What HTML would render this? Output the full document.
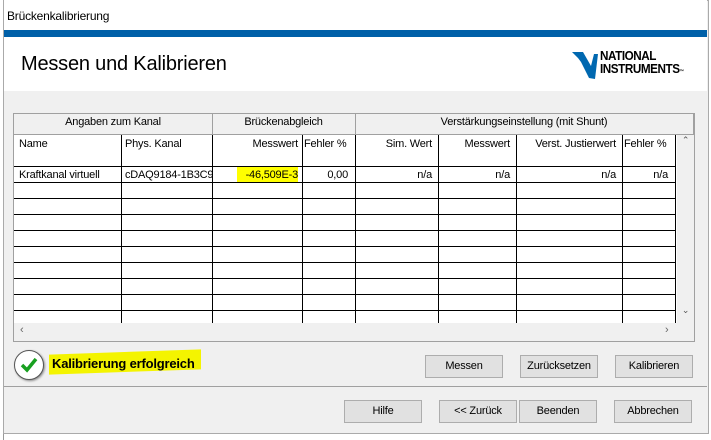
<!DOCTYPE html><html><head><style>
body{margin:0;width:711px;height:440px;overflow:hidden;background:#fff;font-family:"Liberation Sans",sans-serif;font-size:11px;position:relative;letter-spacing:-0.2px}
.a{position:absolute}
.btn{position:absolute;background:#e1e1e1;border:1px solid #adadad;box-sizing:border-box;text-align:center;line-height:20px;font-size:11px;color:#000}
.vl{position:absolute;width:1px;background:#000}
.hl{position:absolute;height:1px;background:#000}
</style></head><body>
<div class="a" style="left:0;top:0;width:3px;height:440px;background:#fff;border-right:1px solid #999"></div>
<div class="a" style="left:3px;top:0;width:704px;height:432px;background:#f0f0f0;border:1px solid #aaa"></div>
<div class="a" style="left:4px;top:0;width:703px;height:30px;background:#fff"></div>
<div class="a" style="left:7px;top:9px;font-size:12px">Brückenkalibrierung</div>
<div class="a" style="left:4px;top:30px;width:703px;height:7px;background:#0060a8"></div>
<div class="a" style="left:4px;top:37px;width:703px;height:54px;background:#fff"></div>
<div class="a" style="left:21px;top:53px;font-size:20px">Messen und Kalibrieren</div>
<svg class="a" style="left:571px;top:48px" width="30" height="32" viewBox="0 0 30 32"><path d="M1 4 L12 4 L20 18 L23 6 L27 6 L24 31 L18 30 L10 14 L7 10 Z" fill="#0068b0"/></svg>
<div class="a" style="left:600px;top:49px;font-weight:bold;font-size:13px;line-height:13px;letter-spacing:-0.5px;transform:scaleX(0.9);transform-origin:left">NATIONAL<br>INSTRUMENTS<span style="font-size:5px">™</span></div>
<div class="a" style="left:13px;top:113px;width:682px;height:229px;border:1px solid #a0a0a0;background:#f0f0f0;box-sizing:border-box"></div>
<div class="a" style="left:14px;top:135px;width:663px;height:188px;background:#fff"></div>
<div class="a" style="left:677px;top:135px;width:17px;height:188px;background:#f0f0f0;font-size:9px;color:#555;text-align:center">⌃<div style="position:absolute;top:170px;width:17px">⌄</div></div>
<div class="a" style="left:20px;top:324px;color:#666">‹</div><div class="a" style="left:665px;top:324px;color:#666">›</div>
<div class="vl" style="left:212px;top:113px;height:22px;background:#a0a0a0"></div>
<div class="vl" style="left:355px;top:113px;height:22px;background:#a0a0a0"></div>
<div class="vl" style="left:693px;top:113px;height:22px;background:#a0a0a0"></div>
<div class="hl" style="left:14px;top:134px;width:680px;background:#a0a0a0"></div>
<div class="a" style="left:14px;top:116px;width:198px;text-align:center">Angaben zum Kanal</div>
<div class="a" style="left:212px;top:116px;width:143px;text-align:center">Brückenabgleich</div>
<div class="a" style="left:355px;top:116px;width:338px;text-align:center">Verstärkungseinstellung (mit Shunt)</div>
<div class="vl" style="left:121px;top:135px;height:188px"></div>
<div class="vl" style="left:212px;top:135px;height:188px"></div>
<div class="vl" style="left:302px;top:135px;height:188px"></div>
<div class="vl" style="left:355px;top:135px;height:188px"></div>
<div class="vl" style="left:438px;top:135px;height:188px"></div>
<div class="vl" style="left:516px;top:135px;height:188px"></div>
<div class="vl" style="left:622px;top:135px;height:188px"></div>
<div class="vl" style="left:675px;top:135px;height:188px"></div>
<div class="hl" style="left:14px;top:166px;width:662px"></div>
<div class="hl" style="left:14px;top:182px;width:662px"></div>
<div class="hl" style="left:14px;top:198px;width:662px"></div>
<div class="hl" style="left:14px;top:214px;width:662px"></div>
<div class="hl" style="left:14px;top:230px;width:662px"></div>
<div class="hl" style="left:14px;top:246px;width:662px"></div>
<div class="hl" style="left:14px;top:262px;width:662px"></div>
<div class="hl" style="left:14px;top:278px;width:662px"></div>
<div class="hl" style="left:14px;top:294px;width:662px"></div>
<div class="hl" style="left:14px;top:310px;width:662px"></div>
<div class="a" style="left:19px;top:138px">Name</div>
<div class="a" style="left:125px;top:138px">Phys. Kanal</div>
<div class="a" style="left:212px;top:138px;width:86px;text-align:right">Messwert</div>
<div class="a" style="left:304px;top:138px">Fehler %</div>
<div class="a" style="left:355px;top:138px;width:77px;text-align:right">Sim. Wert</div>
<div class="a" style="left:438px;top:138px;width:72px;text-align:right">Messwert</div>
<div class="a" style="left:516px;top:138px;width:100px;text-align:right">Verst. Justierwert</div>
<div class="a" style="left:624px;top:138px">Fehler %</div>
<div class="a" style="left:19px;top:169px">Kraftkanal virtuell</div>
<div class="a" style="left:125px;top:169px">cDAQ9184-1B3C9</div>
<div class="a" style="left:237px;top:167px;width:61px;height:15px;background:#ffff00"></div>
<div class="a" style="left:212px;top:169px;width:86px;text-align:right">-46,509E-3</div>
<div class="a" style="left:302px;top:169px;width:46px;text-align:right">0,00</div>
<div class="a" style="left:355px;top:169px;width:77px;text-align:right">n/a</div>
<div class="a" style="left:438px;top:169px;width:72px;text-align:right">n/a</div>
<div class="a" style="left:516px;top:169px;width:100px;text-align:right">n/a</div>
<div class="a" style="left:622px;top:169px;width:46px;text-align:right">n/a</div>
<div class="a" style="left:14px;top:350px;width:28px;height:28px;border-radius:50%;background:#fff;border:1px solid #555;box-shadow:1px 1px 2px #888"></div>
<svg class="a" style="left:20px;top:357px" width="18" height="16"><path d="M2 8 L7 13 L16 2" stroke="#18a020" stroke-width="3.5" fill="none"/></svg>
<div class="a" style="left:49px;top:352px;width:152px;height:20px;background:#f4f400;transform:skewY(-2deg)"></div>
<div class="a" style="left:52px;top:356px;font-size:13px;font-weight:bold">Kalibrierung erfolgreich</div>
<div class="btn" style="left:425px;top:355px;width:78px;height:23px">Messen</div>
<div class="btn" style="left:520px;top:355px;width:78px;height:23px">Zurücksetzen</div>
<div class="btn" style="left:615px;top:355px;width:78px;height:23px">Kalibrieren</div>
<div class="hl" style="left:4px;top:386px;width:703px;background:#a0a0a0"></div>
<div class="btn" style="left:344px;top:400px;width:78px;height:23px">Hilfe</div>
<div class="btn" style="left:439px;top:400px;width:78px;height:23px">&lt;&lt; Zurück</div>
<div class="btn" style="left:519px;top:400px;width:78px;height:23px">Beenden</div>
<div class="btn" style="left:614px;top:400px;width:78px;height:23px">Abbrechen</div>
</body></html>
